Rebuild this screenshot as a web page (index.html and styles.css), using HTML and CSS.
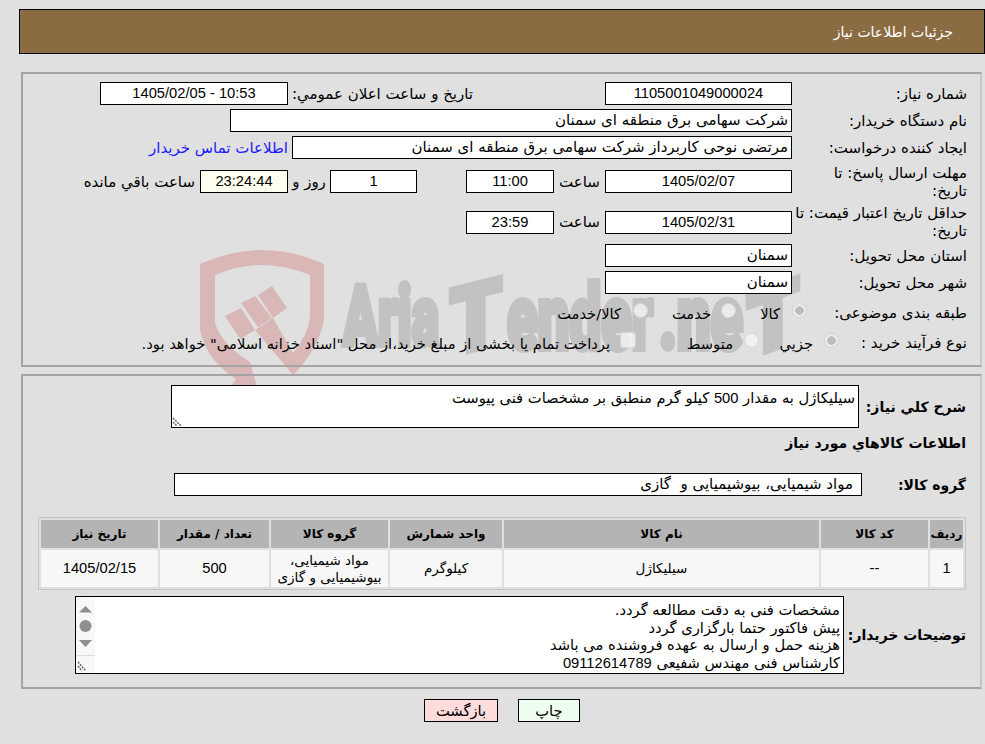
FILE: index.html
```html
<!DOCTYPE html>
<html lang="fa" dir="rtl">
<head>
<meta charset="utf-8">
<title>جزئیات اطلاعات نیاز</title>
<link rel="stylesheet" href="styles.css">
</head>
<body>
<svg class="watermark" width="985" height="744" viewBox="0 0 985 744" aria-hidden="true">
  <path class="wm-red" fill-rule="evenodd" d="M200 264 Q232 250 262 250 Q294 250 324 264 L324 320 Q318 350 293 375 L255 330 L273 318 L293 353 Q308 335 310 317 L310 275 Q285 265 262 265 Q238 265 215 275 L215 323 Q222 345 250 362 L257 387 L231 386 L236 379 Q206 360 200 330 Z"/>
  <polygon class="wm-red" points="225,316 241,308 255,330 240,339"/>
  <polygon class="wm-red" points="241,303 255,296 272,318 258,327"/>
  <polygon class="wm-red" points="258,295 272,286 287,308 273,318"/>
  <g class="wm-text" direction="ltr">
    <text x="343" y="345" font-size="84" textLength="96" lengthAdjust="spacingAndGlyphs">Aria</text>
    <text class="wm-t1" x="450" y="349" font-size="92" textLength="52" lengthAdjust="spacingAndGlyphs">T</text>
    <text x="507" y="349" font-size="90" textLength="146" lengthAdjust="spacingAndGlyphs">ender</text>
    <text x="659" y="349" font-size="90" textLength="84" lengthAdjust="spacingAndGlyphs">.ne</text>
    <text class="wm-t2" x="747" y="349" font-size="88" textLength="52" lengthAdjust="spacingAndGlyphs">T</text>
  </g>
</svg>

<header class="title-bar">جزئیات اطلاعات نیاز</header>

<section class="panel panel-info">
  <div class="row">
    <div class="lbl">شماره نیاز:</div>
    <div class="box w187 center num">1105001049000024</div>
    <div class="lbl lbl-announce">تاریخ و ساعت اعلان عمومي:</div>
    <div class="box w188 center num">10:53 - 1405/02/05</div>
  </div>
  <div class="row">
    <div class="lbl">نام دستگاه خریدار:</div>
    <div class="box w562">شرکت سهامی برق منطقه ای سمنان</div>
  </div>
  <div class="row">
    <div class="lbl">ایجاد کننده درخواست:</div>
    <div class="box w500">مرتضی نوحی کاربرداز شرکت سهامی برق منطقه ای سمنان</div>
    <a class="contact" href="#">اطلاعات تماس خریدار</a>
  </div>
  <div class="row row-tall">
    <div class="lbl lbl-narrow">مهلت ارسال پاسخ: تا تاریخ:</div>
    <div class="box w187 center num">1405/02/07</div>
    <div class="hour">ساعت</div>
    <div class="box w88 center num">11:00</div>
    <div class="box w87 center day num">1</div>
    <div class="day-and">روز و</div>
    <div class="box w88 center ivory num">23:24:44</div>
    <div class="remain">ساعت باقي مانده</div>
  </div>
  <div class="row row-tall2">
    <div class="lbl">حداقل تاریخ اعتبار قیمت: تا تاریخ:</div>
    <div class="box w187 center num">1405/02/31</div>
    <div class="hour">ساعت</div>
    <div class="box w88 center num">23:59</div>
  </div>
  <div class="row">
    <div class="lbl">استان محل تحویل:</div>
    <div class="box w187">سمنان</div>
  </div>
  <div class="row">
    <div class="lbl">شهر محل تحویل:</div>
    <div class="box w187">سمنان</div>
  </div>
  <div class="row row-opt">
    <div class="lbl lbl-cat">طبقه بندی موضوعی:</div>
    <label class="opt opt-a"><input type="radio" name="cat" checked disabled><span>کالا</span></label>
    <label class="opt opt-b"><input type="radio" name="cat" disabled><span>خدمت</span></label>
    <label class="opt opt-c"><input type="radio" name="cat" disabled><span>کالا/خدمت</span></label>
  </div>
  <div class="row row-opt">
    <div class="lbl lbl-proc">نوع فرآیند خرید :</div>
    <label class="opt opt-d"><input type="radio" name="proc" checked disabled><span>جزیي</span></label>
    <label class="opt opt-e"><input type="radio" name="proc" disabled><span>متوسط</span></label>
    <label class="opt opt-f"><input type="checkbox" disabled><span>پرداخت تمام یا بخشی از مبلغ خرید،از محل "اسناد خزانه اسلامی" خواهد بود.</span></label>
  </div>
</section>

<section class="panel panel-goods">
  <div class="row row-desc">
    <div class="lbl-b lbl-desc">شرح کلي نیاز:</div>
    <div class="box area area-desc">سیلیکاژل به مقدار <span class="num">500</span> کیلو گرم منطبق بر مشخصات فنی پیوست
      <svg class="grip" width="10" height="10" viewBox="0 0 10 10" aria-hidden="true"><path d="M1 1 L9 9 M1 5 L5 9" stroke="#666" stroke-width="1.500" stroke-dasharray="2 1" fill="none"/></svg>
    </div>
  </div>
  <h2 class="goods-title">اطلاعات کالاهاي مورد نیاز</h2>
  <div class="row">
    <div class="lbl-b lbl-group">گروه کالا:</div>
    <div class="box w688 group">مواد شیمیایی، بیوشیمیایی و&nbsp; گازی</div>
  </div>
  <table class="goods">
    <colgroup>
      <col class="c1"><col class="c2"><col class="c3"><col class="c4"><col class="c5"><col class="c6"><col class="c7">
    </colgroup>
    <thead>
      <tr><th>ردیف</th><th>کد کالا</th><th>نام کالا</th><th>واحد شمارش</th><th>گروه کالا</th><th>تعداد / مقدار</th><th>تاریخ نیاز</th></tr>
    </thead>
    <tbody>
      <tr><td class="num">1</td><td class="num">--</td><td>سیلیکاژل</td><td>کیلوگرم</td><td>مواد شیمیایی، بیوشیمیایی و گازی</td><td class="num">500</td><td class="num">1405/02/15</td></tr>
    </tbody>
  </table>
  <div class="row row-notes">
    <div class="lbl-b lbl-notes">توضیحات خریدار:</div>
    <div class="box area area-notes">
      <div>مشخصات فنی به دقت مطالعه گردد.</div>
      <div>پیش فاکتور حتما بارگزاری گردد</div>
      <div>هزینه حمل و ارسال به عهده فروشنده می باشد</div>
      <div>کارشناس فنی مهندس شفیعی <span class="num">09112614789</span></div>
      <svg class="scrollbar" width="19" height="76" viewBox="0 0 19 76" aria-hidden="true">
        <rect width="19" height="76" fill="#f8f8f8"/>
        <polygon points="9.500,9 3,15.500 16,15.500" fill="#8f8f8f"/>
        <circle cx="9.500" cy="29" r="6" fill="#8f8f8f"/>
        <polygon points="3,43 16,43 9.500,50" fill="#8f8f8f"/>
        <rect y="58" width="19" height="1" fill="#dcdcdc"/>
        <path d="M2 65 L10 74 M2 69 L6 74" stroke="#666" stroke-width="1.500" stroke-dasharray="2 1" fill="none"/>
      </svg>
    </div>
  </div>
</section>

<div class="actions">
  <button class="btn btn-print" type="button">چاپ</button>
  <button class="btn btn-back" type="button">بازگشت</button>
</div>
</body>
</html>
```

FILE: styles.css
```css
* { box-sizing: border-box; }
html, body { margin: 0; padding: 0; }
body {
  position: relative;
  min-height: 744px;
  background: #e0e0e0;
  color: #000;
  font-family: "DejaVu Sans", sans-serif;
  font-size: 15px;
  line-height: 18px;
  overflow: hidden;
}
.num { font-family: "Liberation Sans", sans-serif; font-size: 14.700px; }
.watermark { position: absolute; left: 0; top: 0; z-index: -1; }
.wm-red { fill: #d9b7b7; }
.wm-text text {
  fill: #c2c2c2;
  stroke: #c2c2c2;
  stroke-width: 6px;
  font-family: Roboto, sans-serif;
  font-weight: 900;
}
.wm-t1 { transform-box: fill-box; transform-origin: 50% 100%; transform: skewY(-14deg); }
.wm-t2 { transform-box: fill-box; transform-origin: 50% 100%; transform: skewY(-20deg); }

.title-bar {
  height: 45px;
  margin-top: 9px;
  width: 966px;
  background: #8b6c42;
  border: 1px solid #000;
  color: #fff;
  font-size: 14px;
  line-height: 44px;
  padding-inline-start: 31px;
}
.panel {
  width: 961px;
  margin-inline-start: 3px;
  border: 2px solid #a4a4a4;
  border-right-color: #c6c6c6;
}
.panel-info { margin-top: 18px; padding: 8px 13px 11px 0; }
.panel-goods { margin-top: 7px; padding: 9px 14px 13px 0; }

.row { display: flex; align-items: center; min-height: 23px; }
.panel-info .row + .row { margin-top: 4px; }
.row-tall { height: 37px; }
.row-tall2 { height: 36px; }
.row-opt { height: 26px; }

.lbl { width: 175px; flex: none; }
.lbl-narrow { padding-left: 24px; }
.lbl-announce { width: 185px; margin-inline-start: 132px; }
.lbl-cat { width: 160px; position: relative; top: 2px; }
.lbl-proc { width: 128px; position: relative; top: 2px; }
.box {
  flex: none;
  height: 23px;
  background: #fff;
  border: 1px solid #000;
  line-height: 21px;
  padding: 0 3px;
  white-space: nowrap;
  overflow: hidden;
}
.center { text-align: center; }
.ivory { background: #fffff0; }
.w187 { width: 187px; }
.w188 { width: 188px; }
.w562 { width: 562px; }
.w500 { width: 500px; }
.w88 { width: 88px; }
.w87 { width: 87px; }
.w688 { width: 688px; }
.contact { color: #1a1aff; text-decoration: none; margin-inline-start: 4px; white-space: nowrap; }
.hour { width: 51px; flex: none; text-align: center; }
.day { margin-inline-start: 49px; }
.day-and { width: 42px; flex: none; text-align: center; }
.remain { margin-inline-start: 5px; white-space: nowrap; }

.opt { display: flex; align-items: center; flex: none; white-space: nowrap; font-size: 14.700px; }
.opt span { position: relative; top: 3px; }
.opt-a { width: 71px; }
.opt-b { width: 88px; }
.opt-d { width: 80px; }
.opt-e { width: 123px; }
.opt input {
  appearance: none;
  -webkit-appearance: none;
  flex: none;
  width: 15px;
  height: 15px;
  margin: 0;
  background: rgba(245, 245, 245, .8);
  border: 1px solid #d4d4d4;
  border-radius: 50%;
  position: relative;
  top: -1px;
}
.opt input[type=checkbox] {
  width: 16px;
  height: 16px;
  border-radius: 3px;
}
.opt input:checked {
  background: radial-gradient(circle, #bdbdbd 0 4px, #ececec 4.500px);
}
.opt-a span, .opt-c span { margin-inline-start: 12px; }
.opt-b span, .opt-f span { margin-inline-start: 10px; }
.opt-d span, .opt-e span { margin-inline-start: 11px; }

.lbl-b { flex: none; font-weight: 700; font-size: 14px; }
.lbl-desc { width: 107px; }
.lbl-group { width: 104px; }
.lbl-notes { width: 122px; }
.area {
  position: relative;
  white-space: normal;
  font-size: 14.700px;
}
.area-desc { width: 688px; height: 43px; padding-top: 3px; line-height: 18px; }
.grip { position: absolute; left: 0; bottom: 0; }
.goods-title {
  margin: 0;
  padding-top: 6px;
  height: 45px;
  font-size: 14px;
  line-height: 18px;
  font-weight: 700;
}
.group { padding-right: 8px; }
.goods {
  table-layout: fixed;
  width: 928px;
  margin-top: 21px;
  border: 1px solid #c4c4c4;
  border-spacing: 2px;
  border-collapse: separate;
  text-align: center;
}
.goods .c1 { width: 33px; }
.goods .c2 { width: 107px; }
.goods .c3 { width: 315px; }
.goods .c4 { width: 112px; }
.goods .c5 { width: 117px; }
.goods .c6 { width: 109px; }
.goods .c7 { width: 117px; }
.goods th {
  height: 28px;
  padding: 0;
  background: #b4b4b4;
  font-size: 12px;
  font-weight: 700;
}
.goods td {
  height: 37px;
  padding: 0;
  background: #f7f7f7;
  font-size: 13.500px;
  line-height: 17px;
}
.goods td.num { font-size: 14.700px; }
.row-notes { margin-top: 6px; }
.area-notes {
  width: 769px;
  height: 78px;
  padding: 4px 3px 0 22px;
  line-height: 17.500px;
}
.scrollbar { position: absolute; left: 0; top: 0; }

.actions {
  display: flex;
  gap: 20px;
  margin-top: 10px;
  margin-inline-start: 405px;
}
.btn {
  height: 23px;
  border: 1px solid #000;
  padding: 0;
  color: #000;
  font-family: inherit;
  font-size: 14.700px;
}
.btn-print { width: 62px; background: #efffef; }
.btn-back { width: 74px; background: #ffdcdc; }
```
